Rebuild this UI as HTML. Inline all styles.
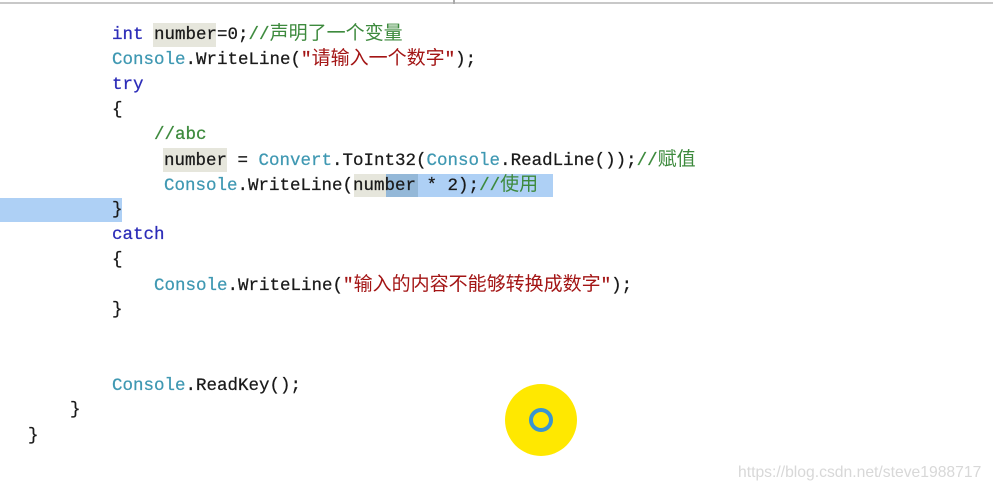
<!DOCTYPE html>
<html><head><meta charset="utf-8"><style>
html,body{margin:0;padding:0;width:993px;height:493px;overflow:hidden;background:#fff;}
.topline{position:absolute;left:0;top:2px;width:993px;height:2px;background:#c8c8c8;}
.tick{position:absolute;left:453px;top:0;width:2px;height:4px;background:#aaa;}
.l{position:absolute;height:25px;line-height:25px;white-space:pre;font-family:"Liberation Mono","Noto Sans CJK SC",monospace;font-size:17.5px;color:#1a1a1a;-webkit-text-stroke:0.25px currentColor;}
.k{color:#2c2cb8}.t{color:#3f98b2}.s{color:#a31515}.c{color:#3d8a3d}
.z{font-size:19px;-webkit-text-stroke:0;}
.hl{position:absolute;background:#e6e6dc;}
.sel{position:absolute;background:#aed0f5;}
.ov{position:absolute;background:#94b8d8;}
.circ{position:absolute;left:505px;top:384px;width:72px;height:72px;border-radius:50%;background:#ffe800;}
.ring{position:absolute;left:529px;top:408px;width:16px;height:16px;border-radius:50%;border:4px solid #3a95cf;}
.wm{position:absolute;left:738px;top:464px;font-family:"Liberation Sans",sans-serif;font-size:15.7px;color:#d8d8d8;}
</style></head><body>
<div class="topline"></div><div class="tick"></div>
<div class="hl" style="left:153px;top:23px;width:63px;height:24px"></div>
<div class="hl" style="left:163px;top:148px;width:64px;height:24px"></div>
<div class="hl" style="left:354px;top:174px;width:32px;height:23px"></div>
<div class="sel" style="left:386px;top:174px;width:167px;height:23px"></div>
<div class="ov" style="left:386px;top:174px;width:32px;height:23px"></div>
<div class="sel" style="left:0;top:198px;width:122px;height:24px"></div>

<div class="l" style="left:112px;top:22px"><span class="k">int</span> number=0;<span class="c">//<span class="z">声明了一个变量</span></span></div>
<div class="l" style="left:112px;top:47px"><span class="t">Console</span>.WriteLine(<span class="s">"<span class="z">请输入一个数字</span>"</span>);</div>
<div class="l" style="left:112px;top:73px"><span class="k">try</span></div>
<div class="l" style="left:112px;top:98px">{</div>
<div class="l" style="left:154px;top:123px"><span class="c">//abc</span></div>
<div class="l" style="left:164px;top:148px">number = <span class="t">Convert</span>.ToInt32(<span class="t">Console</span>.ReadLine());<span class="c">//<span class="z">赋值</span></span></div>
<div class="l" style="left:164px;top:173px"><span class="t">Console</span>.WriteLine(number * 2);<span class="c">//<span class="z">使用</span></span></div>
<div class="l" style="left:112px;top:198px">}</div>
<div class="l" style="left:112px;top:223px"><span class="k">catch</span></div>
<div class="l" style="left:112px;top:248px">{</div>
<div class="l" style="left:154px;top:273px"><span class="t">Console</span>.WriteLine(<span class="s">"<span class="z">输入的内容不能够转换成数字</span>"</span>);</div>
<div class="l" style="left:112px;top:298px">}</div>
<div class="l" style="left:112px;top:374px"><span class="t">Console</span>.ReadKey();</div>
<div class="l" style="left:70px;top:398px">}</div>
<div class="l" style="left:28px;top:424px">}</div>

<div class="circ"></div><div class="ring"></div>
<div class="wm">https://blog.csdn.net/steve1988717</div>
</body></html>
